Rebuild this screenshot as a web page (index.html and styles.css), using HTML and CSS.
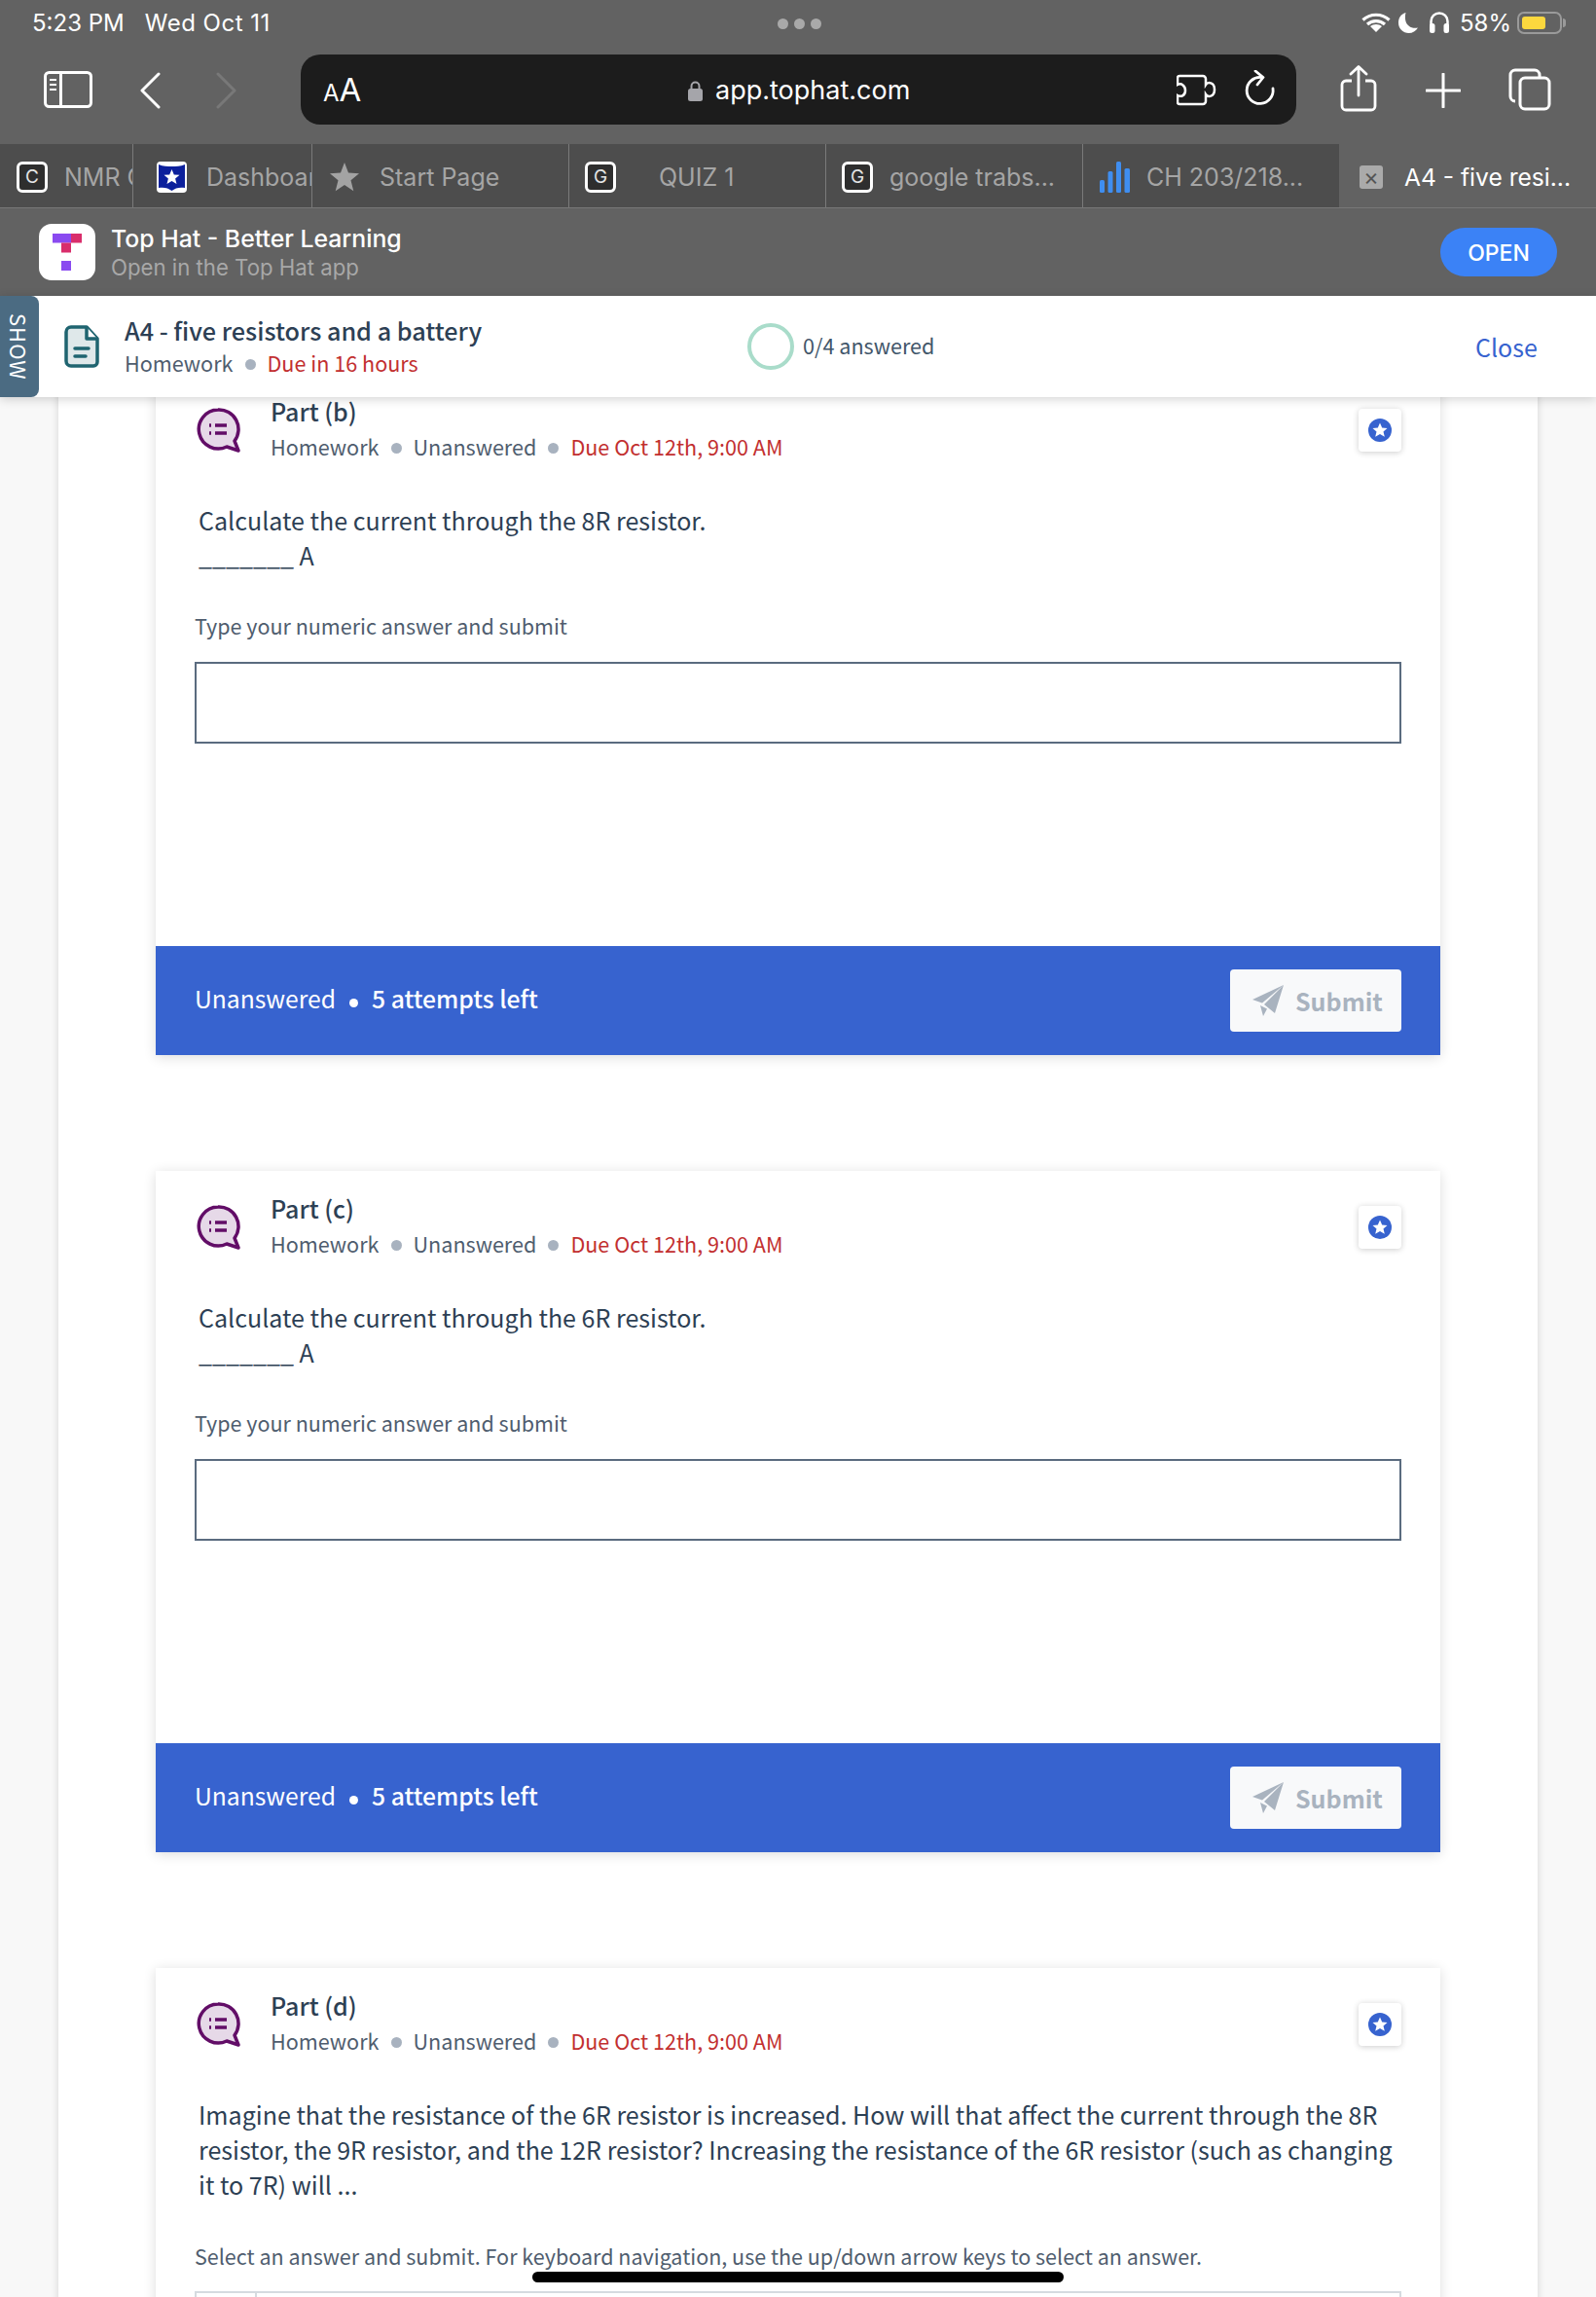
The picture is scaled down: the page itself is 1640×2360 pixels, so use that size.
FILE: index.html
```html
<!DOCTYPE html>
<html lang="en">
<head>
<meta charset="utf-8">
<title>A4 - five resistors and a battery</title>
<link rel="stylesheet" href="styles.css">
</head>
<body>
<div class="chrome">
  <div class="status">
    <div class="status-left"><span>5:23 PM</span><span>Wed Oct 11</span></div>
    <div class="status-dots"><i></i><i></i><i></i></div>
    <div class="status-right">
      <svg width="30" height="20" viewBox="0 0 30 20"><path d="M1.500 7.500C9 .5 21 .5 28.500 7.500M6 12C11 7.500 19 7.500 24 12" fill="none" stroke="#fff" stroke-width="3.200"/><path d="M15 20l-6-6c3-2.800 9-2.800 12 0z" fill="#fff"/></svg>
      <svg class="moon" width="20" height="21" viewBox="0 0 20 21"><path d="M7.500 0C2 1.500 0 6 0 10.500 0 16.500 5 21 10.500 21c4 0 7.500-2 9.500-5.500C13.500 17 9 13.500 7.500 9 6.700 6 6.700 3 7.500 0z" fill="#fff"/></svg>
      <svg class="phones" width="22" height="22" viewBox="0 0 22 22"><path d="M2.500 14V10a8.500 8.500 0 0 1 17 0v4" fill="none" stroke="#fff" stroke-width="2.500"/><rect x="1" y="12" width="5.500" height="10" rx="2.500" fill="#fff"/><rect x="15.500" y="12" width="5.500" height="10" rx="2.500" fill="#fff"/></svg>
      <span class="pct">58%</span>
      <span class="battery"><span class="battery-fill"></span></span>
    </div>
  </div>
  <div class="toolbar">
    <svg class="ic-side" width="50" height="38" viewBox="0 0 50 38"><rect x="1.500" y="1.500" width="47" height="35" rx="4" fill="none" stroke="#fff" stroke-width="3"/><path d="M17.500 2v34" stroke="#fff" stroke-width="3"/><path d="M6 9h7M6 14h7M6 19h7" stroke="#fff" stroke-width="2"/></svg>
    <svg class="ic-back" width="24" height="38" viewBox="0 0 24 38"><path d="M21 2L4 19l17 17" fill="none" stroke="#fff" stroke-width="3" stroke-linecap="round" stroke-linejoin="round"/></svg>
    <svg class="ic-fwd" width="24" height="38" viewBox="0 0 24 38"><path d="M3 2l17 17L3 36" fill="none" stroke="#787878" stroke-width="3" stroke-linecap="round" stroke-linejoin="round"/></svg>
    <div class="urlbar">
      <span class="aa"><small>A</small>A</span>
      <span class="url"><svg width="15" height="21" viewBox="0 0 15 21"><path d="M3.500 9V5.500a4 4 0 0 1 8 0V9" fill="none" stroke="#a5a5aa" stroke-width="2"/><rect y="8" width="15" height="13" rx="2.500" fill="#a5a5aa"/></svg>app.tophat.com</span>
      <svg class="ic-puzzle" width="42" height="33" viewBox="0 0 42 33"><path d="M3 2h24a3 3 0 0 1 3 3v6c2-3 9-3 9 5s-7 8-9 5v7a3 3 0 0 1-3 3H3a2 2 0 0 1-2-2v-7c4 2 8 0 8-5S5 9 1 11V4a2 2 0 0 1 2-2z" fill="none" stroke="#fff" stroke-width="2.500"/></svg>
      <svg class="ic-reload" width="32" height="38" viewBox="0 0 32 38"><path d="M17 7.500A13.500 13.500 0 1 0 29 19" fill="none" stroke="#fff" stroke-width="2.800" stroke-linecap="round"/><path d="M11 1l8 6.500-6 7.500" fill="none" stroke="#fff" stroke-width="2.800" stroke-linecap="round" stroke-linejoin="round"/></svg>
    </div>
    <svg class="ic-share" width="38" height="48" viewBox="0 0 38 48"><path d="M12 16H6a4 4 0 0 0-4 4v22a4 4 0 0 0 4 4h26a4 4 0 0 0 4-4V20a4 4 0 0 0-4-4h-6" fill="none" stroke="#fff" stroke-width="2.800"/><path d="M19 31V2M11 9l8-7.500L27 9" fill="none" stroke="#fff" stroke-width="2.800" stroke-linecap="round" stroke-linejoin="round"/></svg>
    <svg class="ic-plus" width="36" height="36" viewBox="0 0 36 36"><path d="M18 1v34M1 18h34" stroke="#fff" stroke-width="3" stroke-linecap="round"/></svg>
    <svg class="ic-tabs" width="44" height="44" viewBox="0 0 44 44"><path d="M7 34a5 5 0 0 1-5-5V7a5 5 0 0 1 5-5h20a5 5 0 0 1 5 5v2" fill="none" stroke="#fff" stroke-width="3"/><rect x="12" y="10" width="30" height="32" rx="5" fill="none" stroke="#fff" stroke-width="3"/></svg>
  </div>
  <div class="tabs">
    <div class="tab tab-nmr"><span class="fav">C</span><span class="tab-label">NMR C</span></div>
    <div class="tab tab-dash"><svg width="31" height="32" viewBox="0 0 31 32"><rect width="31" height="32" rx="4" fill="#fff"/><path d="M2 3c5 2 9 2 13.500 2S24 5 29 3v24c-5-1-10 0-13.500 3C12 27 7 26 2 27z" fill="#0c209c"/><path d="M15.500 8l2.300 5.400 5.700.4-4.400 3.700 1.400 5.600-5-3-5 3 1.400-5.600-4.400-3.700 5.700-.4z" fill="#fff"/></svg><span class="tab-label">Dashboard</span></div>
    <div class="tab tab-start"><svg width="30" height="30" viewBox="0 0 30 30"><path d="M15 0l4 10.500 11 .7-8.500 7 2.800 11L15 23l-9.300 6.200 2.800-11-8.500-7 11-.7z" fill="#a3a3a3"/></svg><span class="tab-label">Start Page</span></div>
    <div class="tab tab-quiz"><span class="fav">G</span><span class="tab-label">QUIZ 1</span></div>
    <div class="tab tab-google"><span class="fav">G</span><span class="tab-label">google trabs...</span></div>
    <div class="tab tab-ch"><svg width="31" height="32" viewBox="0 0 31 32"><g fill="#3f8ef0"><rect y="19" width="5" height="13" rx="1.500"/><rect x="8.500" y="10" width="5" height="22" rx="1.500"/><rect x="17" y="0" width="5" height="32" rx="1.500"/><rect x="25.500" y="7" width="5.500" height="25" rx="1.500"/></g></svg><span class="tab-label">CH 203/218...</span></div>
    <div class="tab tab-active"><span class="tab-x">×</span><span class="tab-label">A4 - five resi...</span></div>
  </div>
  <div class="banner">
    <div class="app-icon"><svg width="30" height="38" viewBox="0 0 30 38"><rect width="19" height="9.500" fill="#8a4af0"/><rect x="19" width="11" height="9.500" fill="#d92d6b"/><rect x="9" y="9.500" width="10" height="10" fill="#d92d6b"/><rect x="9" y="28" width="10" height="10" fill="#8a4af0"/></svg></div>
    <div class="app-text"><div class="app-title">Top Hat - Better Learning</div><div class="app-sub">Open in the Top Hat app</div></div>
    <div class="open">OPEN</div>
  </div>
</div>

<header class="head">
  <div class="show"><span>SHOW</span></div>
  <svg class="doc" width="36" height="44" viewBox="0 0 36 44"><path d="M7 2h16l11 12v24a4 4 0 0 1-4 4H7a5 5 0 0 1-5-5V7a5 5 0 0 1 5-5z" fill="#dfe8ea" stroke="#1f6470" stroke-width="3.500" stroke-linejoin="round"/><path d="M23 2v12h11" fill="#fff" stroke="#1f6470" stroke-width="3.500" stroke-linejoin="round"/><path d="M11 24h14M11 32h11" stroke="#1f6470" stroke-width="3.500" stroke-linecap="round"/></svg>
  <div class="head-text">
    <div class="head-title">A4 - five resistors and a battery</div>
    <div class="head-sub">Homework<i class="dot"></i><span class="red">Due in 16 hours</span></div>
  </div>
  <div class="progress"><span class="ring"></span><span>0/4 answered</span></div>
  <a class="close">Close</a>
</header>

<main class="page">
  <div class="panel">
    <section class="card card-first">
      <div class="card-head">
        <svg class="bubble" width="46" height="46" viewBox="0 0 46 46"><path d="M22 2a20 20 0 1 0 9 38l12 4-4-10A20 20 0 0 0 22 2z" fill="#e6d9e8" stroke="#620d67" stroke-width="3.500" stroke-linejoin="round"/><path d="M13 18h2M13 26h2M19 18h12M19 26h12" stroke="#620d67" stroke-width="3.500"/></svg>
        <div class="meta"><div class="part">Part (b)</div><div class="sub">Homework<i class="dot"></i>Unanswered<i class="dot"></i><span class="red">Due Oct 12th, 9:00 AM</span></div></div>
        <div class="pin"><svg width="24" height="24" viewBox="0 0 24 24"><circle cx="12" cy="12" r="12" fill="#3763cf"/><path d="M12 4.500l2.200 5 5.300.4-4 3.500 1.300 5.300-4.800-2.800-4.800 2.800 1.300-5.300-4-3.500 5.300-.4z" fill="#fff"/></svg></div>
      </div>
      <div class="question"><p>Calculate the current through the 8R resistor.</p><p>_______ A</p></div>
      <div class="hint">Type your numeric answer and submit</div>
      <div class="answer"></div>
      <div class="bar"><div class="bar-text">Unanswered<i class="wdot"></i><span class="left">5 attempts left</span></div>
        <div class="submit"><svg width="32" height="32" viewBox="0 0 32 32"><path d="M32 0L0 15l10 3.500zM32 0L12 20l11 9zM8 21l3 11 4-7.500z" fill="#a9b3bf"/></svg>Submit</div></div>
    </section>
    <section class="card">
      <div class="card-head">
        <svg class="bubble" width="46" height="46" viewBox="0 0 46 46"><path d="M22 2a20 20 0 1 0 9 38l12 4-4-10A20 20 0 0 0 22 2z" fill="#e6d9e8" stroke="#620d67" stroke-width="3.500" stroke-linejoin="round"/><path d="M13 18h2M13 26h2M19 18h12M19 26h12" stroke="#620d67" stroke-width="3.500"/></svg>
        <div class="meta"><div class="part">Part (c)</div><div class="sub">Homework<i class="dot"></i>Unanswered<i class="dot"></i><span class="red">Due Oct 12th, 9:00 AM</span></div></div>
        <div class="pin"><svg width="24" height="24" viewBox="0 0 24 24"><circle cx="12" cy="12" r="12" fill="#3763cf"/><path d="M12 4.500l2.200 5 5.300.4-4 3.500 1.300 5.300-4.800-2.800-4.800 2.800 1.300-5.300-4-3.500 5.300-.4z" fill="#fff"/></svg></div>
      </div>
      <div class="question"><p>Calculate the current through the 6R resistor.</p><p>_______ A</p></div>
      <div class="hint">Type your numeric answer and submit</div>
      <div class="answer"></div>
      <div class="bar"><div class="bar-text">Unanswered<i class="wdot"></i><span class="left">5 attempts left</span></div>
        <div class="submit"><svg width="32" height="32" viewBox="0 0 32 32"><path d="M32 0L0 15l10 3.500zM32 0L12 20l11 9zM8 21l3 11 4-7.500z" fill="#a9b3bf"/></svg>Submit</div></div>
    </section>
    <section class="card">
      <div class="card-head">
        <svg class="bubble" width="46" height="46" viewBox="0 0 46 46"><path d="M22 2a20 20 0 1 0 9 38l12 4-4-10A20 20 0 0 0 22 2z" fill="#e6d9e8" stroke="#620d67" stroke-width="3.500" stroke-linejoin="round"/><path d="M13 18h2M13 26h2M19 18h12M19 26h12" stroke="#620d67" stroke-width="3.500"/></svg>
        <div class="meta"><div class="part">Part (d)</div><div class="sub">Homework<i class="dot"></i>Unanswered<i class="dot"></i><span class="red">Due Oct 12th, 9:00 AM</span></div></div>
        <div class="pin"><svg width="24" height="24" viewBox="0 0 24 24"><circle cx="12" cy="12" r="12" fill="#3763cf"/><path d="M12 4.500l2.200 5 5.300.4-4 3.500 1.300 5.300-4.800-2.800-4.800 2.800 1.300-5.300-4-3.500 5.300-.4z" fill="#fff"/></svg></div>
      </div>
      <div class="question"><p>Imagine that the resistance of the 6R resistor is increased. How will that affect the current through the 8R resistor, the 9R resistor, and the 12R resistor? Increasing the resistance of the 6R resistor (such as changing it to 7R) will ...</p></div>
      <div class="hint hint-d">Select an answer and submit. For keyboard navigation, use the up/down arrow keys to select an answer.</div>
      <div class="choices"><div class="choice-key"></div></div>
    </section>
  </div>
</main>
<div class="home-bar"></div>
</body>
</html>
```
FILE: styles.css
```css
* { box-sizing: border-box; }
html, body { margin: 0; padding: 0; }
body {
  width: 1640px;
  height: 2360px;
  overflow: hidden;
  position: relative;
  background: #f8f8f8;
  font-family: "Noto Sans CJK SC", "Source Sans Pro", sans-serif;
  color: #2d4054;
}
p { margin: 0; }
i { display: inline-block; }

/* Browser chrome */
.chrome { background: #626262; font-family: Inter, "Liberation Sans", sans-serif; color: #fff; }
.status { height: 56px; display: flex; align-items: center; justify-content: space-between; padding: 0 35px 10px 33px; position: relative; font-size: 24px; }
.status-left { display: flex; gap: 21px; }
.status-left span + span { letter-spacing: .5px; }
.status-dots { position: absolute; left: 799px; top: 19px; display: flex; gap: 6px; }
.status-dots i { width: 11px; height: 11px; border-radius: 50%; background: #a9a9a9; }
.status-right { display: flex; align-items: center; margin-left: -2px; }
.moon { margin-left: 8px; }
.phones { margin-left: 11px; }
.pct { margin-left: 10px; font-size: 24px; }
.battery { width: 46px; height: 23px; margin-left: 6px; border: 2px solid #9a9a9a; border-radius: 7px; padding: 3px; position: relative; display: block; }
.battery::after { content: ""; position: absolute; right: -6px; top: 5px; width: 3px; height: 9px; background: #9a9a9a; border-radius: 0 3px 3px 0; }
.battery-fill { display: block; width: 24px; height: 100%; background: #fcd83e; border-radius: 3px; }

.toolbar { height: 92px; display: flex; align-items: flex-start; padding-left: 45px; }
.ic-side { margin-top: 17px; }
.ic-back { margin: 18px 0 0 47px; }
.ic-fwd { margin: 18px 0 0 55px; }
.urlbar { width: 1023px; height: 72px; margin-left: 64px; background: #1c1c1c; border-radius: 20px; display: flex; align-items: center; position: relative; }
.aa { margin-left: 23px; font-size: 33px; line-height: 1; }
.aa small { font-size: 24px; }
.url { position: absolute; left: 398px; top: 18px; font-size: 27px; line-height: 38px; display: flex; align-items: center; gap: 13px; }
.ic-puzzle { position: absolute; left: 900px; top: 20px; }
.ic-reload { position: absolute; left: 970px; top: 16px; }
.ic-share { margin: 11px 0 0 45px; }
.ic-plus { margin: 19px 0 0 50px; }
.ic-tabs { margin: 14px 0 0 49px; }

.tabs { height: 66px; display: grid; grid-template-columns: 136px 184px 264px 264px 264px 264px 1fr; background: #4d4d4d; border-bottom: 1px solid #777; }
.tab { display: flex; align-items: center; overflow: hidden; border-left: 1px solid #7a7a7a; color: #a5a5a5; white-space: nowrap; padding-top: 2px; }
.tab svg { flex: none; }
.tab:first-child { border-left: 0; }
.tab-label { font-family: Inter, "Liberation Sans", sans-serif; font-size: 25px; }
.fav { flex: none; width: 32px; height: 32px; border-radius: 6px; background: #2e2e2e; border: 3px solid #fff; color: #e4e4e4; font-size: 19px; display: flex; align-items: center; justify-content: center; }
.tab-nmr { padding-left: 17px; gap: 17px; }
.tab-dash { padding-left: 24px; gap: 20px; }
.tab-start { padding-left: 18px; gap: 21px; }
.tab-quiz { padding-left: 16px; gap: 44px; }
.tab-google { padding-left: 16px; gap: 17px; }
.tab-ch { padding-left: 17px; gap: 17px; }
.tab-active { background: #626262; border-left: 0; padding-left: 21px; gap: 22px; color: #fff; }
.tab-active .tab-label { font-size: 24.6px; }
.tab-x { flex: none; width: 24px; height: 24px; border-radius: 3px; background: #aaa; color: #555; font-size: 24px; line-height: 24px; text-align: center; }

.banner { height: 90px; display: flex; align-items: center; padding: 0 40px; }
.app-icon { width: 58px; height: 58px; background: #fff; border-radius: 13px; padding: 10px 0 0 14px; display: flex; }
.app-text { margin-left: 16px; flex: 1; margin-top: -1px; }
.app-title { font-size: 24.8px; line-height: 32px; font-weight: 500; }
.app-sub { font-size: 22.2px; line-height: 27px; color: #a8a8a8; }
.open { width: 120px; height: 50px; border-radius: 25px; background: #3b82f6; font-size: 23px; font-weight: 500; text-align: center; line-height: 52px; }

/* Assignment header */
.head { height: 104px; background: #fff; display: flex; align-items: center; position: relative; z-index: 2; box-shadow: 0 2px 10px rgba(0,0,0,.18); }
.show { width: 40px; height: 104px; background: #4b6b82; border-radius: 0 8px 8px 0; display: flex; align-items: center; justify-content: center; color: #fff; }
.show span { writing-mode: vertical-rl; font-size: 22px; letter-spacing: 1px; font-family: "Noto Sans CJK SC", sans-serif; }
.doc { margin-left: 26px; }
.head-text { margin-left: 26px; width: 640px; margin-top: -1px; }
.head-title { font-size: 25.2px; line-height: 34px; font-weight: 500; }
.head-sub { font-size: 21.6px; line-height: 32px; color: #4f5d6e; margin-top: 1px; }
.red { color: #c22f30; }
.dot { width: 11px; height: 11px; margin: 0 12px; border-radius: 50%; background: #a8b2bf; vertical-align: 2px; }
.wdot { width: 9px; height: 9px; margin: 0 14px; border-radius: 50%; background: #fff; vertical-align: 1px; }
.progress { display: flex; align-items: center; gap: 9px; font-size: 21.6px; color: #42566a; width: 748px; margin-top: -3px; }
.progress .ring { margin-top: 3px; }
.ring { width: 48px; height: 48px; border-radius: 50%; border: 4px solid #a9dcca; }
.close { font-size: 25px; color: #3763cf; }

/* Page */
.page { padding: 0 60px; }
.panel { background: #fff; padding: 0 100px; box-shadow: 0 0 8px rgba(0,0,0,.15); }
.card { height: 700px; margin-bottom: 119px; background: #fff; box-shadow: 0 2px 12px rgba(0,0,0,.14); position: relative; padding: 0 40px; }
.card-first { margin-top: -24px; }
.card-head { display: flex; padding-top: 20px; }
.bubble { margin: 15px 0 0 2px; flex: none; }
.meta { margin-left: 30px; flex: 1; }
.part { font-size: 25px; line-height: 36px; font-weight: 500; }
.sub { font-size: 21.6px; line-height: 36px; color: #4f5d6e; margin-top: 1px; }
.pin { width: 44px; height: 44px; margin-top: 16px; border-radius: 4px; background: #fff; box-shadow: 0 1px 6px rgba(0,0,0,.2); display: flex; align-items: center; justify-content: center; }
.question { margin: 39px 0 0 4px; font-size: 25.05px; line-height: 36px; }
.hint { margin-top: 37px; height: 36px; font-size: 21.5px; line-height: 36px; color: #4f5d6e; }
.hint-d { margin-top: 38px; }
.answer { margin-top: 19px; height: 84px; border: 2px solid #5a6b7f; }
.bar { position: absolute; left: 0; right: 0; bottom: 0; height: 112px; background: #3763cf; display: flex; align-items: center; justify-content: space-between; padding: 0 40px; color: #fff; }
.bar-text { font-size: 24.7px; margin-top: -6px; }
.left { font-weight: 500; }
.submit { width: 176px; height: 64px; background: #f8f9fa; border-radius: 4px; color: #a9b3bf; font-size: 25px; font-weight: 700; display: flex; align-items: center; padding-left: 23px; gap: 12px; }
.choices { margin-top: 18px; height: 60px; border: 2px solid #d5dbe0; }
.choice-key { width: 62px; height: 100%; border-right: 2px solid #d5dbe0; }

.home-bar { position: absolute; left: 547px; top: 2334px; width: 546px; height: 11px; background: #000; border-radius: 6px; z-index: 3; }
```
